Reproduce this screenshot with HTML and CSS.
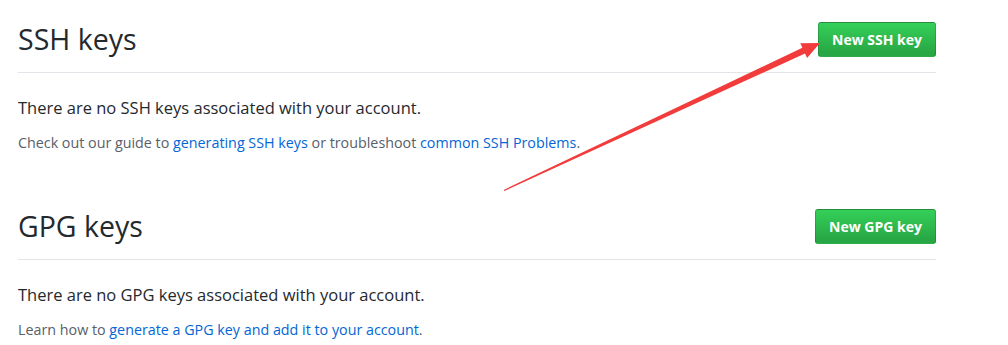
FILE: index.html
```html
<!DOCTYPE html>
<html>

<head>
    <meta charset="utf-8">
    <link rel="stylesheet" href="styles.css">
</head>

<body>
    <div class="settings">
        <!-- SSH keys -->
        <div class="subhead">
            <h2 class="subhead-heading">SSH keys</h2>
            <button type="button" class="btn-green">New SSH key</button>
        </div>
        <p class="blank">There are no SSH keys associated with your account.</p>
        <p class="note">Check out our guide to <a href="#">generating SSH keys</a> or troubleshoot <a href="#">common SSH Problems</a>.</p>

        <!-- GPG keys -->
        <div class="subhead subhead-spaced">
            <h2 class="subhead-heading">GPG keys</h2>
            <button type="button" class="btn-green">New GPG key</button>
        </div>
        <p class="blank">There are no GPG keys associated with your account.</p>
        <p class="note">Learn how to <a href="#">generate a GPG key and add it to your account</a>.</p>
    </div>

    <!-- annotation arrow drawn on top of the page -->
    <svg class="arrow" width="1008" height="345" viewBox="0 0 1008 345">
        <polygon points="504.3,191 805,53.5 807.1,57.9 820,43 800.3,43.3 802.4,47.7 503.7,189.9" fill="#f23b3b" />
    </svg>
</body>

</html>
```

FILE: styles.css
```css
body {
    margin: 0;
    background-color: #fff;
    font-family: "Open Sans", "Noto Sans", sans-serif;
    color: #24292e;
}

.settings {
    width: 918px;
    padding: 22px 0 0 18px;
}

/* Section header */
.subhead {
    display: flex;
    align-items: center;
    justify-content: space-between;
    padding-bottom: 15px;
    border-bottom: 1px solid #e1e4e8;
}

.subhead-spaced {
    margin-top: 56px;
}

.subhead-heading {
    margin: 0;
    font-size: 28.5px;
    font-weight: 400;
    line-height: 35px;
}

.btn-green {
    height: 35px;
    padding: 0 13px;
    font-family: inherit;
    font-size: 14px;
    font-weight: 700;
    color: #fff;
    background-color: #28a745;
    background-image: linear-gradient(-180deg, #34d058 0%, #28a745 90%);
    border: 1px solid rgba(27, 31, 35, 0.2);
    border-radius: 3px;
    cursor: pointer;
}

.blank {
    margin: 23px 0 0;
    font-size: 16.5px;
    line-height: 24px;
}

.note {
    margin: 13px 0 0;
    font-size: 14.3px;
    line-height: 20px;
    color: #586069;
}

.note a {
    color: #0366d6;
    text-decoration: none;
}

.arrow {
    position: absolute;
    left: 0;
    top: 0;
    pointer-events: none;
}
```
